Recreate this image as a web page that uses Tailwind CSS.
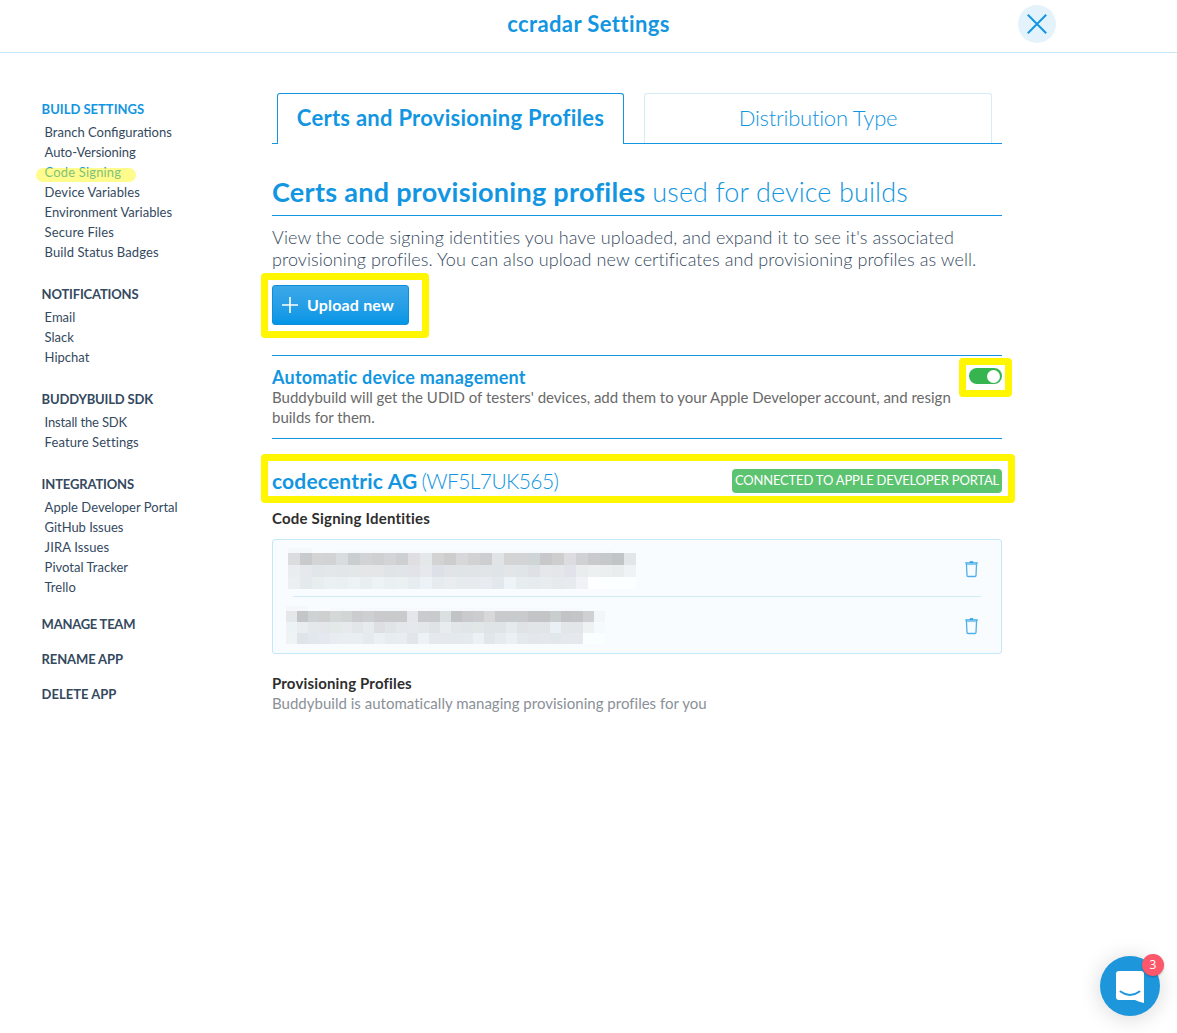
<!DOCTYPE html>
<html lang="en">
<head>
<meta charset="utf-8">
<title>ccradar Settings</title>
<script src="https://cdn.jsdelivr.net/npm/@tailwindcss/browser@4"></script>
</head>
<body class="relative h-[1033px] w-[1177px] overflow-hidden bg-white font-['Lato',sans-serif] text-[#34495e]">

<header class="relative flex h-[53px] items-center justify-center border-b border-[#c5e7f9] pb-1">
  <h1 class="text-[22px] leading-8 font-bold tracking-[0.4px] text-[#1296e1]">ccradar Settings</h1>
  <button class="absolute top-[5px] left-[1018px] flex size-[38px] items-center justify-center rounded-full bg-[#e4f3fb]" aria-label="Close">
    <svg class="size-5" viewBox="0 0 20 20" fill="none" stroke="#1296e1" stroke-width="2"><path d="M.8.8l18.4 18.4M19.2.8L.8 19.2"/></svg>
  </button>
</header>

<div class="flex">
  <nav class="w-[272px] shrink-0 pt-[46px] pl-[41.6px] text-[13px] leading-5">
    <section>
      <h2 class="mb-[3px] font-bold text-[#1296e1]">BUILD SETTINGS</h2>
      <ul class="pl-[3px]">
        <li>Branch Configurations</li>
        <li class="tracking-[-0.08px]">Auto-Versioning</li>
        <li class="relative text-[#1296e1]"><span class="tracking-[0.16px]">Code Signing</span><span class="absolute top-[6px] -left-[9px] h-[14px] w-[100px] rounded-full bg-[#fff600]/45"></span></li>
        <li class="tracking-[0.11px]">Device Variables</li>
        <li class="tracking-[0.02px]">Environment Variables</li>
        <li class="tracking-[0.12px]">Secure Files</li>
        <li class="tracking-[0.1px]">Build Status Badges</li>
      </ul>
    </section>
    <section class="mt-[22px]">
      <h2 class="mb-[3px] font-bold tracking-[-0.18px]">NOTIFICATIONS</h2>
      <ul class="pl-[3px]"><li>Email</li><li>Slack</li><li>Hipchat</li></ul>
    </section>
    <section class="mt-[22px]">
      <h2 class="mb-[3px] font-bold tracking-[-0.16px]">BUDDYBUILD SDK</h2>
      <ul class="pl-[3px]"><li class="tracking-[-0.15px]">Install the SDK</li><li class="tracking-[0.11px]">Feature Settings</li></ul>
    </section>
    <section class="mt-[22px]">
      <h2 class="mb-[3px] font-bold tracking-[-0.15px]">INTEGRATIONS</h2>
      <ul class="pl-[3px] tracking-[0.02px]"><li>Apple Developer Portal</li><li class="tracking-[-0.05px]">GitHub Issues</li><li class="tracking-[0.12px]">JIRA Issues</li><li>Pivotal Tracker</li><li>Trello</li></ul>
    </section>
    <div class="mt-[17px] flex flex-col gap-[15px] font-bold tracking-[-0.25px]">
      <a>MANAGE TEAM</a><a class="tracking-[-0.12px]">RENAME APP</a><a class="tracking-[0]">DELETE APP</a>
    </div>
  </nav>

  <main class="w-[730px] pt-10">
    <div class="flex h-[51px] text-[22px] text-[#1296e1]">
      <div class="w-[6px] border-b border-[#1296e1]"></div>
      <div class="-ml-px flex w-[347px] items-center justify-center rounded-t-[3px] border border-b-0 border-[#1296e1] pb-[3px] font-bold tracking-[0.27px]">Certs and Provisioning Profiles</div>
      <div class="-ml-px w-[21px] border-b border-[#1296e1]"></div>
      <div class="flex w-[348px] flex-col border-b border-[#1296e1]"><div class="flex flex-1 items-center justify-center rounded-t-[3px] border border-b-0 border-[#d6ecf9] pb-[2px] font-light tracking-[-0.24px]">Distribution Type</div></div>
      <div class="w-[10px] border-b border-[#1296e1]"></div>
    </div>

    <h2 class="flex h-[72px] items-center gap-[7px] border-b border-[#1296e1] pt-[26px] text-[27px] whitespace-nowrap text-[#1296e1]"><b class="tracking-[0.28px]">Certs and provisioning profiles</b><span class="font-light tracking-[0.12px]">used for device builds</span></h2>

    <p class="mt-[10px] text-[18px] leading-[22px] font-light tracking-[0.085px] whitespace-nowrap">View the code signing identities you have uploaded, and expand it to see it's associated<br><span class="tracking-[0.065px]">provisioning profiles. You can also upload new certificates and provisioning profiles as well.</span></p>

    <div class="relative mt-[15px] h-10">
      <button class="flex h-10 w-[137px] items-center gap-[9px] rounded-[3px] border border-[#0f8fdb] bg-linear-to-b from-[#3ba8e8] to-[#0096e6] pl-[9px] text-white">
        <svg class="size-4" viewBox="0 0 16 16" stroke="#fff" stroke-width="1.6" fill="none"><path d="M8 0v16M0 8h16"/></svg>
        <span class="text-[16px] font-bold tracking-[0.17px]">Upload new</span>
      </button>
      <span class="absolute -top-[12px] -left-[11px] h-[64.5px] w-[167.500px] rounded-[4px] border-7 border-[#fff600]"></span>
    </div>

    <section class="relative mt-[30px] h-[84px] border-y border-[#1296e1] pt-[11px]">
      <h3 class="text-[18px] leading-[21px] font-bold tracking-[0.22px] text-[#1296e1]">Automatic device management</h3>
      <p class="-mt-px text-[15px] leading-5 whitespace-nowrap text-[#6a6a6a]">Buddybuild will get the UDID of testers' devices, add them to your Apple Developer account, and resign<br>builds for them.</p>
      <span class="absolute top-3 right-0 flex h-4 w-[33px] items-center justify-end rounded-full bg-[#35b44f] pr-[2px]"><span class="size-[13px] rounded-full bg-white"></span></span>
      <span class="absolute top-[2px] -right-[10px] h-[39px] w-[53.500px] rounded-[4px] border-7 border-[#fff600]"></span>
    </section>

    <div class="relative mt-[30px] flex h-6 items-center justify-between">
      <h3 class="flex gap-[4px] pb-px text-[21px] text-[#1296e1]"><b class="tracking-[0.18px]">codecentric AG</b><span class="font-light tracking-[-0.6px]">(WF5L7UK565)</span></h3>
      <span class="flex h-6 w-[270px] items-center justify-center rounded-[4px] bg-[#5cc371] text-[13px] tracking-[-0.19px] text-white">CONNECTED TO APPLE DEVELOPER PORTAL</span>
      <span class="absolute -top-[15px] -left-[11px] h-[49px] w-[753.500px] rounded-[4px] border-7 border-[#fff600]"></span>
    </div>

    <h4 class="mt-[15px] text-[15px] leading-5 font-bold tracking-[0.21px] text-[#2e2e2e]">Code Signing Identities</h4>

    <div class="mt-[11px] h-[115px] rounded-[3px] border border-[#c5e7f9] bg-[#f8fcff]">
      <div class="relative ml-5 flex h-[57px] w-[688px] items-center justify-end border-b border-[#d2eaf8] pt-px pr-[3px]">
        <svg id="identity-1" class="absolute top-[7px] -left-[5px] h-[48px] w-[372px]" shape-rendering="crispEdges"></svg>
        <svg class="h-[18px] w-[13px]" viewBox="0 0 13 18" fill="none" stroke="#4fb0e8"><path d="M.3 3h12.4" stroke="#1296e1" stroke-width="1.2"/><path d="M4.8 2h3.4" stroke="#1296e1" stroke-width="1.4"/><path d="M1.5 4.3h10" stroke="#8ccbf0" stroke-width="1.6"/><path d="M1.4 3.3l.6 12.2q.1 1 1 1h7q.9 0 1-1l.6-12.2" stroke-width="1.3"/></svg>
      </div>
      <div class="relative ml-5 flex h-[56px] w-[688px] items-center justify-end pt-px pr-[3px]">
        <svg id="identity-2" class="absolute top-[7px] -left-[7px] h-[46px] w-[372px]" shape-rendering="crispEdges"></svg>
        <svg class="h-[18px] w-[13px]" viewBox="0 0 13 18" fill="none" stroke="#4fb0e8"><path d="M.3 3h12.4" stroke="#1296e1" stroke-width="1.2"/><path d="M4.8 2h3.4" stroke="#1296e1" stroke-width="1.4"/><path d="M1.5 4.3h10" stroke="#8ccbf0" stroke-width="1.6"/><path d="M1.4 3.3l.6 12.2q.1 1 1 1h7q.9 0 1-1l.6-12.2" stroke-width="1.3"/></svg>
      </div>
    </div>

    <h4 class="mt-[19px] text-[15px] leading-5 font-bold tracking-[0.16px] text-[#2e2e2e]">Provisioning Profiles</h4>
    <p class="text-[15px] leading-5 tracking-[0.015px] text-[#8b9097]">Buddybuild is automatically managing provisioning profiles for you</p>
  </main>
</div>

<div class="absolute top-[956px] left-[1100px] size-[60px] rounded-full bg-[#1d96dc] shadow-[0_2px_22px_rgba(0,0,0,0.16)]">
  <svg class="size-[60px]" viewBox="0 0 60 60" fill="none"><path d="M19 15h22q3 0 3 3v29q-5-1-9-3H19q-3 0-3-3V18q0-3 3-3z" fill="#fff"/><path d="M20.500 35.500q9.500 7 19 0" stroke="#1d96dc" stroke-width="2" stroke-linecap="round"/></svg>
  <span class="absolute -top-[2px] left-[42px] flex size-[22px] items-center justify-center rounded-full bg-[#fc576b] pb-px font-['Open_Sans',sans-serif] text-[12px] text-white shadow-[0_1px_2px_rgba(0,0,0,0.25)]">3</span>
</div>

<script>
// Redacted identity names, drawn as a mosaic: one colour per cell
const mosaics = {
  'identity-1': { cell: 12, top: 6, rows: [
    'dadddd c9cacb d4d4d5 d2d3d4 d9dcdd c9cecf d2d3d4 d0d0d1 d4d3d5 cecfd0 dfdfe1 e4e8e9 d3d3d4 cdcdce d8d8da d2d2d3 cdcecf e0e4e5 d4d4d5 d2d4d5 cfd4d5 c8c8ca cececf dddce0 ced2d3 c9cacb c5c9ca c1c5c6 e2e6e6',
    'e9edf0 e5e9ed e0e6e9 e3e7e9 e3e6e8 e3e7e8 e4e6e8 e4e6e8 e0e4e7 e1e4e8 e1e3e9 e5e8ec dde0e6 e0e4e7 dfe4e6 e1e4e7 e2e5e8 dfe4e8 e3e6e8 e0e5e8 dde1e5 e5e7ea e4e6e9 e1e3ea e9edee edf0f0 ebefef e9eded eff3f3',
    'ebeff1 e4e9ee e8edf0 ebf0f3 eaeff2 edf2f5 e9eef0 edf2f5 eaeff2 ebf0f3 e7ecf0 edf2f6 e6ebef e9edf0 e6ebee e7ebef e8ecf0 e3e8ec edf3f7 e7ecef e6ebef e8ecef e6eaed e7ebef eff3f7 fcfeff fcffff fcffff fcffff' ] },
  'identity-2': { cell: 11, top: 7, rows: [
    'e4e8e8 c4c5c7 cdd2d2 ced0d0 d4d8d8 d1d6d5 c9cdce cdcfd0 cacacc c9cacb c9cacb e3e6ea cacbcd c8cacb dae0df c2c3c5 cacacc cccdcf d8d8da c8cacb c7cbcc c8cacb c3c4c6 c3c4c6 c8cecd c2c3c5 c4c5c7 cfd0d2 f2f6f7',
    'edf3f4 e9edf0 e4e8ea e4e7e9 e3e8e9 e6eaec e3e6e9 e7ebee dddfe3 e1e4e7 e4e8ed e5e8ed e3e7ea dfe3e6 e8ecef e3e6e9 e0e6e7 e1e6e7 dfe4e5 dfe4e7 e5eaec dfe3e6 e2e5e8 e2e5e8 eaf0f3 e3e6e9 e3e6e9 eef2f3 f5fafb',
    'eef4f4 dfe4e9 e2e7ed e5e8ee e9edf1 e9eef2 e9eef2 e5eaef ebf0f4 e7ecf0 e8edf1 e2e6eb ecf2f6 e5e9ee e5e9ed e4e9ee e5eaee ebf1f5 e1e6ea e6ebef ebf0f4 e4e9ed e2e7eb e4e8ec e2e7eb e5e9ed e5e9ee f9feff f9feff' ] }
};
const draw = (svg, x, y, w, h, fill) => {
  const r = document.createElementNS('http://www.w3.org/2000/svg', 'rect');
  for (const [k, v] of Object.entries({ x, y, width: w, height: h, fill })) r.setAttribute(k, v);
  svg.append(r);
};
for (const [id, m] of Object.entries(mosaics)) {
  const svg = document.getElementById(id);
  draw(svg, 0, m.top - 5, m.cell * 2, 5, '#f4f8fa');
  draw(svg, m.cell * 4, m.top - 3, m.cell * 23, 3, '#f6fafc');
  m.rows.forEach((row, j) => row.split(' ').forEach((c, i) => draw(svg, i * m.cell, m.top + j * m.cell, m.cell, m.cell, '#' + c)));
}
</script>
</body>
</html>
